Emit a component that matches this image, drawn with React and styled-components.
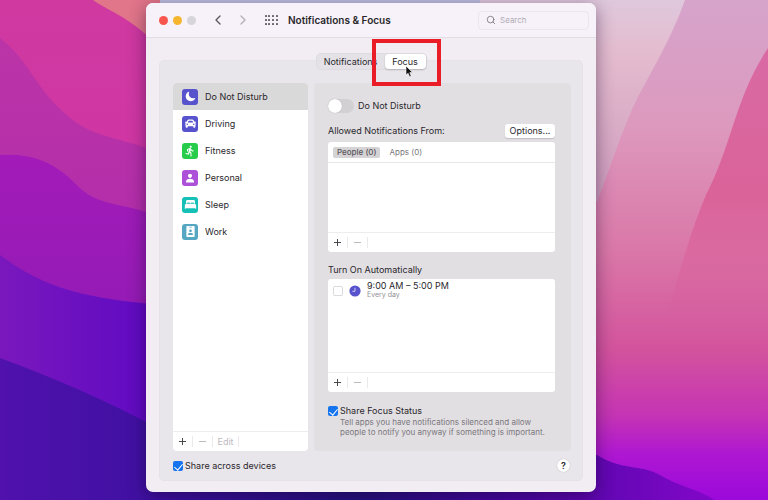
import React, { useState } from 'react';
import styled, { createGlobalStyle } from 'styled-components';
import { FiChevronLeft, FiChevronRight, FiSearch } from 'react-icons/fi';
import { IoMoon, IoPerson, IoBed } from 'react-icons/io5';
import { MdDirectionsRun } from 'react-icons/md';
import { FaCar, FaIdBadge } from 'react-icons/fa';

const GlobalStyle = createGlobalStyle`
  * {
    box-sizing: border-box;
  }
  body {
    margin: 0;
    background: #4a10a8;
    color: #29272b;
    font-family: Inter, "Liberation Sans", sans-serif;
    font-size: 9px;
    line-height: 12px;
  }
  button, input {
    margin: 0;
    padding: 0;
    border: 0;
    background: none;
    color: inherit;
    font: inherit;
  }
`;

const Desktop = styled.main`
  position: relative;
  display: flex;
  min-height: 100vh;
  padding: 3px 172px 8px 146px;
`;

const WallpaperSvg = styled.svg`
  position: absolute;
  inset: 0;
  width: 100%;
  height: 100%;
`;

const Window = styled.section`
  position: relative;
  flex: 1;
  min-width: 0;
  display: flex;
  flex-direction: column;
  border-radius: 7px;
  background: #f1edf3;
  box-shadow: 0 4px 18px rgba(20, 0, 40, 0.45);
`;

const TitleBar = styled.header`
  display: flex;
  align-items: center;
  height: 35px;
  padding: 0 7px 0 13px;
  border-bottom: 1px solid #e2dde5;
  border-radius: 7px 7px 0 0;
  background: #f7f2f9;
`;

const Lights = styled.div`
  display: flex;
  gap: 5px;
  margin-right: 13px;
`;

const Light = styled.button`
  width: 9px;
  height: 9px;
  border-radius: 50%;
  background: ${props => props.$color};
`;

const NavButton = styled.button`
  display: flex;
  width: 18px;
  margin-right: 7px;
  justify-content: center;
  color: ${props => (props.disabled ? '#b3afb6' : '#5b585e')};
`;

const GridButton = styled.button`
  display: flex;
  margin: 0 10px 0 6px;
  color: #67646a;
`;

const Title = styled.h1`
  flex: 1;
  margin: 0;
  font-size: 10px;
  font-weight: 600;
  white-space: nowrap;
`;

const SearchBox = styled.label`
  display: flex;
  align-items: center;
  gap: 4px;
  width: 111px;
  height: 19px;
  padding: 0 7px;
  border: 1px solid #ebe6ee;
  border-radius: 4px;
  color: #77747a;
`;

const SearchInput = styled.input`
  width: 100%;
  min-width: 0;
  font-size: 8px;
  outline: none;
  &::placeholder {
    color: #b0acb3;
    opacity: 1;
  }
`;

const Body = styled.div`
  flex: 1;
  display: flex;
  flex-direction: column;
  padding: 16px 13px 11px;
`;

const Segments = styled.div`
  position: relative;
  z-index: 1;
  align-self: center;
  display: flex;
  height: 15px;
  margin-bottom: -9px;
  border-radius: 4px;
  background: #e5e2e7;
  box-shadow: 0 0 0 1px #dfdbe1;
`;

const SegmentSlot = styled.div`
  position: relative;
  display: flex;
`;

const Segment = styled.button`
  width: ${props => (props.$wide ? '68px' : '41px')};
  border-radius: 4px;
  background: ${props => (props.$active ? '#fff' : 'transparent')};
  box-shadow: ${props => (props.$active ? '0 1px 2px rgba(0, 0, 0, 0.2)' : 'none')};
`;

const Highlight = styled.div`
  position: absolute;
  top: -15px;
  left: -13px;
  width: 69px;
  height: 47px;
  border: 4px solid #ea1c28;
  pointer-events: none;
`;

const Cursor = styled.svg`
  position: absolute;
  top: 11px;
  left: 20px;
  pointer-events: none;
`;

const Panel = styled.div`
  flex: 1;
  display: flex;
  flex-direction: column;
  padding: 22px 11px 0 13px;
  border: 1px solid #e6e2e8;
  border-radius: 5px;
  background: #e9e6eb;
`;

const Columns = styled.div`
  flex: 1;
  display: grid;
  grid-template-columns: minmax(0, 135fr) minmax(0, 257fr);
  gap: 6px;
`;

const Sidebar = styled.nav`
  display: flex;
  flex-direction: column;
  border-radius: 4px;
  background: #fff;
  overflow: hidden;
`;

const FocusList = styled.ul`
  flex: 1;
  margin: 0;
  padding: 0;
  list-style: none;
`;

const FocusButton = styled.button`
  display: flex;
  align-items: center;
  gap: 7px;
  width: 100%;
  height: 27px;
  padding: 0 9px;
  background: ${props => (props.$selected ? '#dad9da' : 'transparent')};
`;

const FocusIcon = styled.span`
  display: flex;
  align-items: center;
  justify-content: center;
  width: 16px;
  height: 16px;
  border-radius: 3px;
  color: #fff;
  background: ${props => props.$color};
`;

const ListFooter = styled.div`
  display: flex;
  align-items: center;
  height: 20px;
  border-top: 1px solid #eeecef;
`;

const FooterButton = styled.button`
  display: flex;
  align-items: center;
  justify-content: center;
  width: ${props => (props.$wide ? '26px' : '20px')};
  height: 11px;
  border-right: 1px solid #ebe9ec;
  color: ${props => (props.disabled ? '#bdbabf' : '#4a474c')};
`;

const Detail = styled.section`
  display: flex;
  flex-direction: column;
  padding: 15px 16px 14px 14px;
  border-radius: 4px;
  background: #e2dfe3;
`;

const SwitchRow = styled.label`
  display: flex;
  align-items: center;
  gap: 4px;
  height: 15px;
`;

const Switch = styled.input`
  appearance: none;
  width: 26px;
  height: 14px;
  border-radius: 7px;
  background: ${props => (props.checked ? '#1574ee' : '#d3d0d4')};
  &::after {
    content: "";
    display: block;
    width: 14px;
    height: 14px;
    margin-left: ${props => (props.checked ? '12px' : '0')};
    border-radius: 50%;
    background: #fff;
    box-shadow: 0 0 1px rgba(0, 0, 0, 0.3);
  }
`;

const SectionHead = styled.div`
  display: flex;
  align-items: center;
  justify-content: space-between;
  height: 14px;
  margin: ${props => (props.$tight ? '11px 0 2px' : '11px 0 4px')};
`;

const SectionTitle = styled.h2`
  margin: 0;
  font-size: 9px;
  font-weight: 400;
`;

const OptionsButton = styled.button`
  width: 50px;
  height: 14px;
  border-radius: 3px;
  background: #fff;
  box-shadow: 0 1px 1px rgba(0, 0, 0, 0.15);
`;

const Box = styled.div`
  flex: ${props => props.$grow};
  display: flex;
  flex-direction: column;
  border-radius: 3px;
  background: #fff;
`;

const BoxTabs = styled.div`
  display: flex;
  align-items: center;
  gap: 3px;
  height: 21px;
  padding: 0 5px;
  border-bottom: 1px solid #e9e6ea;
`;

const BoxTab = styled.button`
  height: 11px;
  padding: 0 4px;
  border-radius: 2px;
  font-size: 8px;
  line-height: 11px;
  font-weight: ${props => (props.$active ? '500' : '400')};
  color: ${props => (props.$active ? '#59565b' : '#79767b')};
  background: ${props => (props.$active ? '#d5d3d5' : 'transparent')};
  & + & {
    padding: 0 6px;
  }
`;

const BoxContent = styled.div`
  flex: 1;
`;

const Schedule = styled.label`
  display: flex;
  align-items: center;
  gap: 6px;
  height: 24px;
  padding: 0 5px;
`;

const ScheduleText = styled.span`
  display: flex;
  flex-direction: column;
  padding-bottom: 2px;
  line-height: 10px;
`;

const Note = styled.span`
  color: #949196;
  font-size: 7px;
  line-height: 8px;
`;

const Check = styled.input`
  appearance: none;
  flex: none;
  width: 10px;
  height: 10px;
  border-radius: 2px;
  background: ${props => (props.checked ? '#1574ee' : '#fff')};
  box-shadow: ${props => (props.checked ? 'none' : 'inset 0 0 0 1px #dddadf')};
  &:checked::after {
    content: "";
    display: block;
    width: 4px;
    height: 7px;
    margin: 1px 0 0 3px;
    border: solid #fff;
    border-width: 0 1px 1px 0;
    transform: rotate(40deg);
  }
`;

const CheckRow = styled.label`
  display: flex;
  align-items: center;
  gap: 2px;
`;

const Status = styled.div`
  margin-top: 13px;
`;

const Hint = styled.p`
  margin: 0 0 0 12px;
  color: #7a777c;
  font-size: 8px;
  line-height: 10px;
`;

const PanelFooter = styled.footer`
  display: flex;
  align-items: center;
  justify-content: space-between;
  height: 29px;
`;

const HelpButton = styled.button`
  width: 13px;
  height: 13px;
  margin-right: 1px;
  border-radius: 50%;
  font-weight: 600;
  background: #fff;
  box-shadow: 0 0 1px rgba(0, 0, 0, 0.3);
`;

const focusModes = [
  { name: 'Do Not Disturb', color: '#5753cd', icon: <IoMoon size={11} /> },
  { name: 'Driving', color: '#5753cd', icon: <FaCar size={11} /> },
  { name: 'Fitness', color: '#28cc4b', icon: <MdDirectionsRun size={12} /> },
  { name: 'Personal', color: '#ac51d8', icon: <IoPerson size={10} /> },
  { name: 'Sleep', color: '#15c1b7', icon: <IoBed size={13} /> },
  { name: 'Work', color: '#55a7c2', icon: <FaIdBadge size={11} /> },
];

function Wallpaper() {
  return (
    <WallpaperSvg viewBox="0 0 768 500" preserveAspectRatio="none" aria-hidden="true">
      <defs>
        <linearGradient id="pink" x1="0" y1="0" x2="0" y2="1">
          <stop offset="0" stopColor="#cf39a0" />
          <stop offset="1" stopColor="#d22fac" />
        </linearGradient>
        <linearGradient id="magenta" x1="0" y1="0" x2="0" y2="1">
          <stop offset="0" stopColor="#bb34a7" />
          <stop offset="1" stopColor="#b02bac" />
        </linearGradient>
        <linearGradient id="violet" x1="0" y1="0" x2="0" y2="1">
          <stop offset="0" stopColor="#a31bb9" />
          <stop offset="1" stopColor="#8c1bb4" />
        </linearGradient>
        <linearGradient id="purple" x1="0" y1="0" x2="1" y2="0">
          <stop offset="0" stopColor="#7a18bd" />
          <stop offset="1" stopColor="#5f0ac2" />
        </linearGradient>
        <linearGradient id="navy" x1="0" y1="0" x2="1" y2="0">
          <stop offset="0" stopColor="#5011ad" />
          <stop offset="0.25" stopColor="#3c109f" />
          <stop offset="0.5" stopColor="#25107f" />
          <stop offset="0.7" stopColor="#4506a0" />
          <stop offset="1" stopColor="#8307c9" />
        </linearGradient>
        <linearGradient id="mist" x1="0" y1="0" x2="0" y2="1">
          <stop offset="0" stopColor="#dfc8dc" />
          <stop offset="0.25" stopColor="#e4bccf" />
          <stop offset="1" stopColor="#cf9cbd" />
        </linearGradient>
        <linearGradient id="rose" x1="0" y1="0" x2="0" y2="1">
          <stop offset="0" stopColor="#d6a4cb" />
          <stop offset="0.25" stopColor="#dd99be" />
          <stop offset="0.5" stopColor="#da78a8" />
          <stop offset="0.7" stopColor="#d3539d" />
          <stop offset="0.83" stopColor="#c534b4" />
          <stop offset="0.91" stopColor="#ae17d2" />
          <stop offset="1" stopColor="#9b09db" />
        </linearGradient>
        <linearGradient id="hot" x1="0" y1="0" x2="0" y2="1">
          <stop offset="0" stopColor="#d96aa4" />
          <stop offset="0.5" stopColor="#da6399" />
          <stop offset="1" stopColor="#d75b9c" stopOpacity="0" />
        </linearGradient>
      </defs>
      <rect width="400" height="500" fill="url(#pink)" />
      <path d="M93 0C108 11 125 15 150 38H400V0Z" fill="#e17589" />
      <path d="M160 0H600V40H160Z" fill="#bfbfdf" />
      <path d="M0 38C28 60 34 84 59 108C88 137 106 134 150 149V300H0Z" fill="url(#magenta)" />
      <path d="M0 155C30 153 48 161 65 174C77 184 82 193 97 199C112 205 128 206 150 213V400H0Z" fill="url(#violet)" />
      <path d="M0 255C20 270 45 284 72 291C98 298 122 301 150 304V500H0Z" fill="url(#purple)" />
      <rect x="480" width="288" height="500" fill="url(#rose)" />
      <path d="M480 0H685C671 40 650 73 635 103C618 140 607 178 597 202H480Z" fill="url(#mist)" />
      <path d="M768 48C735 98 732 145 706 195C692 228 682 262 660 340H768Z" fill="url(#hot)" />
      <path
        d="M0 358C60 380 108 402 150 424L400 455H597C620 470 642 465 658 474C680 487 700 490 715 500H0Z"
        fill="url(#navy)"
      />
    </WallpaperSvg>
  );
}

function GridIcon() {
  return (
    <svg width="13" height="10" viewBox="0 0 13 10" fill="currentColor" aria-hidden="true">
      {[0, 4, 8].map(y =>
        [0, 3, 7, 11].map(x => <rect key={x + '-' + y} x={x} y={y} width="2" height="2" rx="0.5" />)
      )}
    </svg>
  );
}

function ClockIcon() {
  return (
    <svg width="12" height="12" viewBox="0 0 12 12" aria-hidden="true">
      <circle cx="6" cy="6" r="5.6" fill="#5753cd" />
      <path d="M6 2.8V6.3H3.4" fill="none" stroke="#d9d8f7" strokeWidth="0.9" />
    </svg>
  );
}

function PlusMinus({ children }) {
  return (
    <ListFooter>
      <FooterButton aria-label="Add">
        <svg width="7" height="7" viewBox="0 0 7 7" stroke="currentColor" strokeWidth="1">
          <path d="M0 3.5H7M3.5 0V7" />
        </svg>
      </FooterButton>
      <FooterButton aria-label="Remove" disabled>
        <svg width="7" height="7" viewBox="0 0 7 7" stroke="currentColor" strokeWidth="1">
          <path d="M0 3.5H7" />
        </svg>
      </FooterButton>
      {children}
    </ListFooter>
  );
}

function App() {
  const [tab, setTab] = useState('focus');
  const [mode, setMode] = useState('Do Not Disturb');
  const [source, setSource] = useState('people');
  const [enabled, setEnabled] = useState(false);
  const [scheduled, setScheduled] = useState(false);
  const [shareStatus, setShareStatus] = useState(true);
  const [shareDevices, setShareDevices] = useState(true);

  return (
    <Desktop>
      <GlobalStyle />
      <Wallpaper />
      <Window>
        <TitleBar>
          <Lights>
            <Light $color="#f9554f" aria-label="Close" />
            <Light $color="#f6b52e" aria-label="Minimize" />
            <Light $color="#d8d5da" aria-label="Zoom" />
          </Lights>
          <NavButton aria-label="Back"><FiChevronLeft size={16} /></NavButton>
          <NavButton aria-label="Forward" disabled><FiChevronRight size={16} /></NavButton>
          <GridButton aria-label="Show all"><GridIcon /></GridButton>
          <Title>Notifications &amp; Focus</Title>
          <SearchBox>
            <FiSearch size={10} style={{ flex: 'none' }} />
            <SearchInput type="text" placeholder="Search" aria-label="Search" />
          </SearchBox>
        </TitleBar>

        <Body>
          <Segments>
            <Segment $wide $active={tab === 'notifications'} onClick={() => setTab('notifications')}>
              Notifications
            </Segment>
            <SegmentSlot>
              <Segment $active={tab === 'focus'} onClick={() => setTab('focus')}>Focus</Segment>
              <Highlight />
              <Cursor width="9" height="13" viewBox="0 0 9 13" aria-hidden="true">
                <path
                  d="M1 1V10L3.1 8.2L4.6 11.8L6.2 11.1L4.8 7.6H7.6Z"
                  fill="#111" stroke="#fff" strokeWidth="0.6"
                />
              </Cursor>
            </SegmentSlot>
          </Segments>

          <Panel>
            <Columns>
              <Sidebar aria-label="Focus modes">
                <FocusList>
                  {focusModes.map(item => (
                    <li key={item.name}>
                      <FocusButton $selected={mode === item.name} onClick={() => setMode(item.name)}>
                        <FocusIcon $color={item.color}>{item.icon}</FocusIcon>
                        {item.name}
                      </FocusButton>
                    </li>
                  ))}
                </FocusList>
                <PlusMinus>
                  <FooterButton $wide disabled>Edit</FooterButton>
                </PlusMinus>
              </Sidebar>

              <Detail>
                <SwitchRow>
                  <Switch
                    type="checkbox"
                    role="switch"
                    checked={enabled}
                    onChange={e => setEnabled(e.target.checked)}
                  />
                  {mode}
                </SwitchRow>

                <SectionHead>
                  <SectionTitle>Allowed Notifications From:</SectionTitle>
                  <OptionsButton>Options...</OptionsButton>
                </SectionHead>
                <Box $grow={110}>
                  <BoxTabs>
                    <BoxTab $active={source === 'people'} onClick={() => setSource('people')}>People (0)</BoxTab>
                    <BoxTab $active={source === 'apps'} onClick={() => setSource('apps')}>Apps (0)</BoxTab>
                  </BoxTabs>
                  <BoxContent />
                  <PlusMinus />
                </Box>

                <SectionHead $tight>
                  <SectionTitle>Turn On Automatically</SectionTitle>
                </SectionHead>
                <Box $grow={113}>
                  <BoxContent>
                    <Schedule>
                      <Check
                        type="checkbox"
                        checked={scheduled}
                        onChange={e => setScheduled(e.target.checked)}
                      />
                      <ClockIcon />
                      <ScheduleText>
                        9:00 AM – 5:00 PM
                        <Note>Every day</Note>
                      </ScheduleText>
                    </Schedule>
                  </BoxContent>
                  <PlusMinus />
                </Box>

                <Status>
                  <CheckRow>
                    <Check
                      type="checkbox"
                      checked={shareStatus}
                      onChange={e => setShareStatus(e.target.checked)}
                    />
                    Share Focus Status
                  </CheckRow>
                  <Hint>
                    Tell apps you have notifications silenced and allow people to notify you anyway
                    if something is important.
                  </Hint>
                </Status>
              </Detail>
            </Columns>

            <PanelFooter>
              <CheckRow>
                <Check
                  type="checkbox"
                  checked={shareDevices}
                  onChange={e => setShareDevices(e.target.checked)}
                />
                Share across devices
              </CheckRow>
              <HelpButton aria-label="Help">?</HelpButton>
            </PanelFooter>
          </Panel>
        </Body>
      </Window>
    </Desktop>
  );
}

export default App;
